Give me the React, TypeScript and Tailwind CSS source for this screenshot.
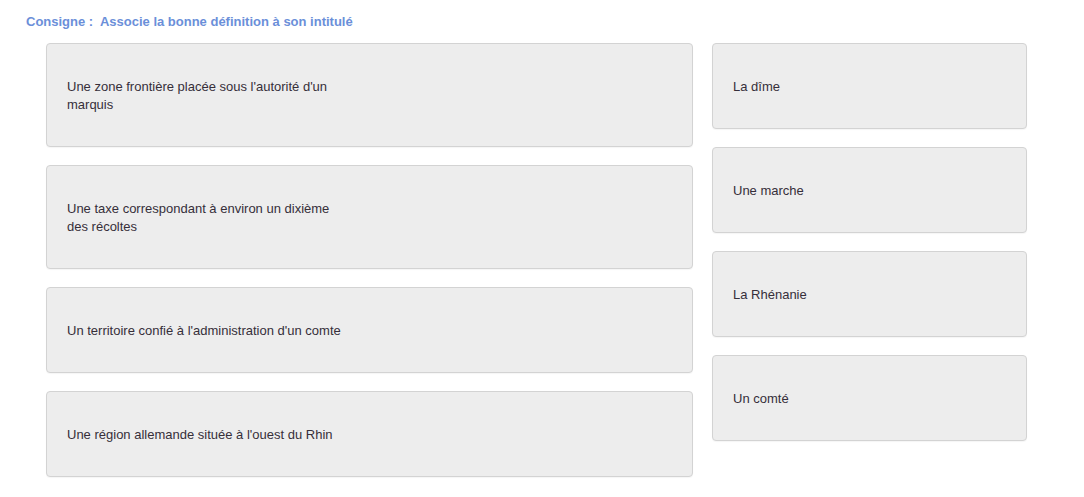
import React from 'react';

const definitions = [
    "Une zone frontière placée sous l'autorité d'un marquis",
    'Une taxe correspondant à environ un dixième des récoltes',
    "Un territoire confié à l'administration d'un comte",
    "Une région allemande située à l'ouest du Rhin",
];

const terms = ['La dîme', 'Une marche', 'La Rhénanie', 'Un comté'];

function Card({ text, width }: { text: string; width: string }) {
    return (
        <div className={`${width} rounded-[4px] border border-[#d3d3d3] bg-[#ededed] px-5 pt-[34px] pb-[32px] shadow-[0_1px_1px_rgba(0,0,0,0.04)]`}>
            <div className="max-w-[280px] text-[13px] leading-[18px] text-[#362f3a]">{text}</div>
        </div>
    );
}

export default function App() {
    return (
        <div className="min-h-screen bg-white pt-[15px] pl-[26px] font-['Liberation_Sans',Arial,sans-serif]">
            <h1 className="whitespace-pre text-[13px] font-bold leading-[14px] text-[#6b8fd9]">
                {'Consigne :  Associe la bonne définition à son intitulé'}
            </h1>
            <div className="mt-[14px] flex items-start gap-[19px] pl-[20px]">
                <div className="flex flex-col gap-[18px]">
                    {definitions.map((d) => (
                        <Card key={d} text={d} width="w-[647px]" />
                    ))}
                </div>
                <div className="flex flex-col gap-[18px]">
                    {terms.map((t) => (
                        <Card key={t} text={t} width="w-[315px]" />
                    ))}
                </div>
            </div>
        </div>
    );
}
